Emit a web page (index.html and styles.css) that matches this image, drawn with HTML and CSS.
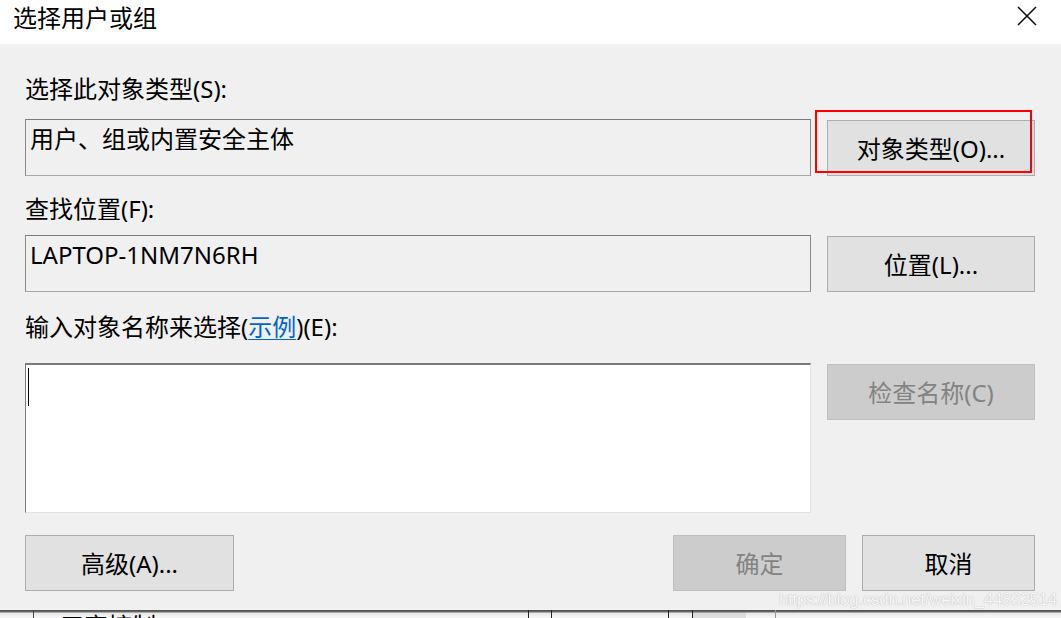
FILE: index.html
```html
<!DOCTYPE html>
<html lang="zh-CN">
<head>
<meta charset="utf-8">
<title>选择用户或组</title>
<link rel="stylesheet" href="styles.css">
</head>
<body>
<div class="window">
  <header class="titlebar">
    <div class="title">选择用户或组</div>
    <div class="close">
      <svg width="20" height="20" viewBox="0 0 20 20"><path d="M1 1 L19 19 M19 1 L1 19" stroke="#111" stroke-width="1.6" fill="none"/></svg>
    </div>
  </header>
  <main class="dialog">
    <div class="label l1">选择此对象类型(S):</div>
    <div class="row r1">
      <div class="field">用户、组或内置安全主体</div>
      <div class="btn-wrap">
        <button class="btn">对象类型(O)...</button>
        <div class="mark"></div>
      </div>
    </div>
    <div class="label l2">查找位置(F):</div>
    <div class="row r2">
      <div class="field">LAPTOP-1NM7N6RH</div>
      <button class="btn">位置(L)...</button>
    </div>
    <div class="label l3">输入对象名称来选择(<span class="link">示例</span>)(E):</div>
    <div class="row r3">
      <div class="textarea"><span class="caret"></span></div>
      <button class="btn disabled">检查名称(C)</button>
    </div>
    <div class="footer">
      <button class="btn wide">高级(A)...</button>
      <div class="spacer"></div>
      <button class="btn disabled small">确定</button>
      <button class="btn small">取消</button>
    </div>
    <div class="watermark">https://blog.csdn.net/weixin_44832514</div>
  </main>
  <div class="behind">
    <div class="bcell c1"></div>
    <div class="bcell c2"><span class="btext">三容控制</span></div>
    <div class="bcell c3"></div>
    <div class="bcell c4"></div>
    <div class="bcell c5"></div>
    <div class="bcell c6"></div>
    <div class="bcell c7"></div>
    <div class="bcell c8"></div>
  </div>
</div>
</body>
</html>
```

FILE: styles.css
```css
* { box-sizing: border-box; }
html, body {
  margin: 0;
  padding: 0;
  width: 1061px;
  height: 618px;
  overflow: hidden;
  background: #f0f0f0;
}
body {
  font-family: "Noto Sans", "Noto Sans CJK SC", sans-serif;
  font-size: 24px;
  color: #000;
}
.window {
  width: 1061px;
  height: 618px;
  display: flex;
  flex-direction: column;
}
.titlebar {
  height: 44px;
  background: #fff;
  display: flex;
  align-items: flex-start;
  justify-content: space-between;
  flex: none;
}
.title {
  padding-left: 13px;
  padding-top: 2px;
  line-height: 32px;
  font-size: 24px;
}
.close {
  width: 20px;
  height: 20px;
  margin-top: 6px;
  margin-right: 24px;
}
.close svg { display: block; }

.dialog {
  position: relative;
  height: 566px;
  flex: none;
  background: #f0f0f0;
  padding: 30px 26px 0 25px;
  display: flex;
  flex-direction: column;
}
.label {
  line-height: 30px;
  height: 30px;
  white-space: nowrap;
}
.l1 { margin-bottom: 15px; }
.l2 { margin-top: 18px; margin-bottom: 11px; }
.l3 { margin-top: 20px; margin-bottom: 21px; }
.link {
  color: #0066cc;
  text-decoration: underline;
  text-underline-offset: 3px;
  text-decoration-thickness: 1px;
}
.row {
  display: grid;
  grid-template-columns: 786px 208px;
  column-gap: 16px;
  align-items: start;
}
.field {
  height: 57px;
  border: 1px solid #8a8a8a;
  border-top-color: #7a7a7a;
  border-bottom-color: #a8a8a8;
  background: #f0f0f0;
  padding: 4px 4px;
  line-height: 30px;
  white-space: nowrap;
}
.btn {
  font: inherit;
  color: #000;
  background: #e1e1e1;
  border: 1px solid #adadad;
  height: 56px;
  width: 208px;
  margin: 1px 0 0 0;
  padding: 2px 0 0 0;
  line-height: 30px;
  display: flex;
  align-items: center;
  justify-content: center;
  white-space: nowrap;
  border-radius: 0;
}
.btn-wrap {
  position: relative;
  width: 208px;
  height: 57px;
}
.mark {
  position: absolute;
  left: -12px;
  top: -9px;
  width: 217px;
  height: 63px;
  border: 2px solid #ff0000;
  pointer-events: none;
}
.btn.disabled {
  background: #cccccc;
  border-color: #bfbfbf;
  color: #838383;
}
.textarea {
  height: 150px;
  background: #fff;
  border-top: 2px solid #7a7a7a;
  border-left: 1px solid #7a7a7a;
  border-right: 1px solid #e3e3e3;
  border-bottom: 1px solid #e3e3e3;
  padding: 3px 0 0 2px;
}
.caret {
  display: block;
  width: 1px;
  height: 38px;
  background: #000;
}
.footer {
  margin-top: 22px;
  display: flex;
  align-items: flex-start;
}
.footer .btn { margin-top: 0; }
.btn.wide { width: 209px; }
.btn.small { width: 173px; }
.btn.small + .btn.small { margin-left: 16px; }
.spacer { flex: 1; }
.watermark {
  position: absolute;
  right: 4px;
  bottom: 0px;
  font-family: "Liberation Sans", Arial, sans-serif;
  font-size: 17px;
  letter-spacing: -0.3px;
  line-height: 20px;
  color: rgba(255, 255, 255, 0.9);
  text-shadow: 0 0 1px #b8b8b8, 0 0 1px #c8c8c8;
}

.behind {
  flex: 1;
  display: flex;
  background: linear-gradient(#4d4d4d 0, #6a6a6a 2px, #e8e8e8 3px, #f7f7f7 8px);
  overflow: hidden;
  position: relative;
}
.bcell {
  height: 100%;
  border-right: 1px solid #222;
  flex: none;
}
.c1 { width: 34px; border-right-color: #444; }
.c2 { width: 495px; position: relative; overflow: hidden; }
.c3 { width: 23px; }
.c4 { width: 117px; }
.c5 { width: 24px; }
.c6 { width: 53px; border-right: none; background: linear-gradient(#4d4d4d 0, #6a6a6a 2px, #d8d8d8 3px, #e0e0e0 8px); }
.c7 { width: 30px; border-right-color: #999; }
.c8 { width: 17px; border-right: none; }
.btext {
  position: absolute;
  left: 26px;
  top: 2px;
  font-size: 24px;
  line-height: 26px;
  color: #000;
  white-space: nowrap;
  font-family: "Noto Sans CJK SC", sans-serif;
}
```
